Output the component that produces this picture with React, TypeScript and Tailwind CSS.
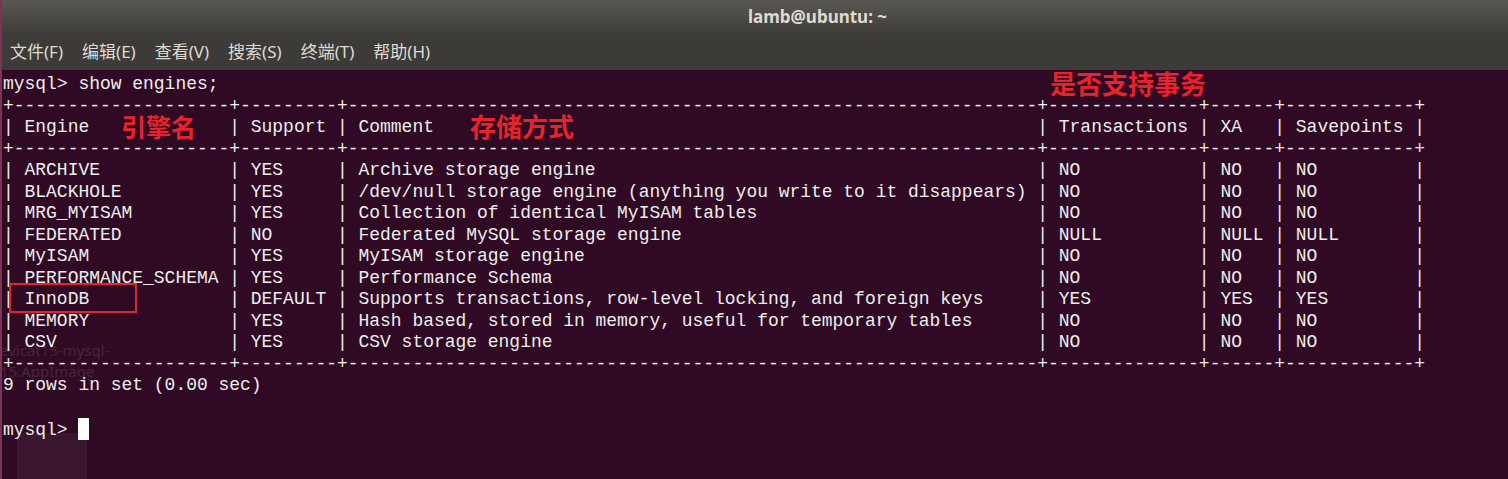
import React from 'react';

type Row = [string, string, string, string, string, string];

const widths = [18, 7, 62, 12, 4, 10];

const header: Row = ['Engine', 'Support', 'Comment', 'Transactions', 'XA', 'Savepoints'];

const rows: Row[] = [
  ['ARCHIVE', 'YES', 'Archive storage engine', 'NO', 'NO', 'NO'],
  ['BLACKHOLE', 'YES', '/dev/null storage engine (anything you write to it disappears)', 'NO', 'NO', 'NO'],
  ['MRG_MYISAM', 'YES', 'Collection of identical MyISAM tables', 'NO', 'NO', 'NO'],
  ['FEDERATED', 'NO', 'Federated MySQL storage engine', 'NULL', 'NULL', 'NULL'],
  ['MyISAM', 'YES', 'MyISAM storage engine', 'NO', 'NO', 'NO'],
  ['PERFORMANCE_SCHEMA', 'YES', 'Performance Schema', 'NO', 'NO', 'NO'],
  ['InnoDB', 'DEFAULT', 'Supports transactions, row-level locking, and foreign keys', 'YES', 'YES', 'YES'],
  ['MEMORY', 'YES', 'Hash based, stored in memory, useful for temporary tables', 'NO', 'NO', 'NO'],
  ['CSV', 'YES', 'CSV storage engine', 'NO', 'NO', 'NO'],
];

const sep = '+' + widths.map(w => '-'.repeat(w + 2)).join('+') + '+';
const line = (r: Row) => '| ' + r.map((c, i) => c.padEnd(widths[i])).join(' | ') + ' |';

const menus = ['文件(F)', '编辑(E)', '查看(V)', '搜索(S)', '终端(T)', '帮助(H)'];

const App: React.FC = () => {
  const lines = [
    'mysql> show engines;',
    sep,
    line(header),
    sep,
    ...rows.map(line),
    sep,
    '9 rows in set (0.00 sec)',
    '',
  ];

  return (
    <div className="w-[1508px] h-[479px] flex flex-col overflow-hidden border-l-2 border-[#7a3556]">
      {/* Title bar */}
      <div className="h-[33px] shrink-0 flex items-center pl-[746px] bg-gradient-to-b from-[#5a5852] to-[#3f3e3a]">
        <span className="text-[17px] font-bold text-[#dfdbd2] font-['Noto_Sans',sans-serif]">lamb@ubuntu: ~</span>
      </div>

      {/* Menu bar */}
      <div className="h-[37px] shrink-0 flex items-center gap-[19px] pl-[8px] bg-[#3c3b37] text-[17px] text-[#dfdbd2] font-['Noto_Sans','Noto_Sans_CJK_SC',sans-serif]">
        {menus.map(m => (
          <span key={m}>{m}</span>
        ))}
      </div>

      {/* Terminal */}
      <div className="relative flex-1 bg-[#300a24] pt-[4px] pl-[1px]">
        <pre className="font-['Liberation_Mono',monospace] text-[17.97px] leading-[21.5px] text-[#eeeeec] whitespace-pre">
          {lines.join('\n')}
          {'\n'}
          mysql&gt; <span className="inline-block w-[11px] h-[22px] align-[-5px] bg-white" />
        </pre>

        {/* faint desktop icons showing through */}
        <div className="absolute left-[-2px] top-[270px] text-[15px] leading-[21px] text-white/10 font-['Noto_Sans',sans-serif] pointer-events-none">
          <div>evicat15-mysql-</div>
          <div>15.AppImage</div>
        </div>
        <div className="absolute left-[15px] top-[363px] w-[70px] h-[50px] rounded-sm bg-white/5 pointer-events-none" />

        {/* Annotations */}
        <div className="absolute left-[1048px] top-[0px] text-[26px] leading-none font-bold text-[#e8232b] font-['Noto_Sans_CJK_SC',sans-serif] pointer-events-none">
          是否支持事务
        </div>
        <div className="absolute left-[119px] top-[44px] text-[25px] leading-none font-bold text-[#e8232b] font-['Noto_Sans_CJK_SC',sans-serif] pointer-events-none">
          引擎名
        </div>
        <div className="absolute left-[468px] top-[43px] text-[26px] leading-none font-bold text-[#e8232b] font-['Noto_Sans_CJK_SC',sans-serif] pointer-events-none">
          存储方式
        </div>
        <div className="absolute left-[7px] top-[213px] w-[128px] h-[30px] border-2 border-[#e02530] pointer-events-none" />
      </div>
    </div>
  );
};

export default App;
